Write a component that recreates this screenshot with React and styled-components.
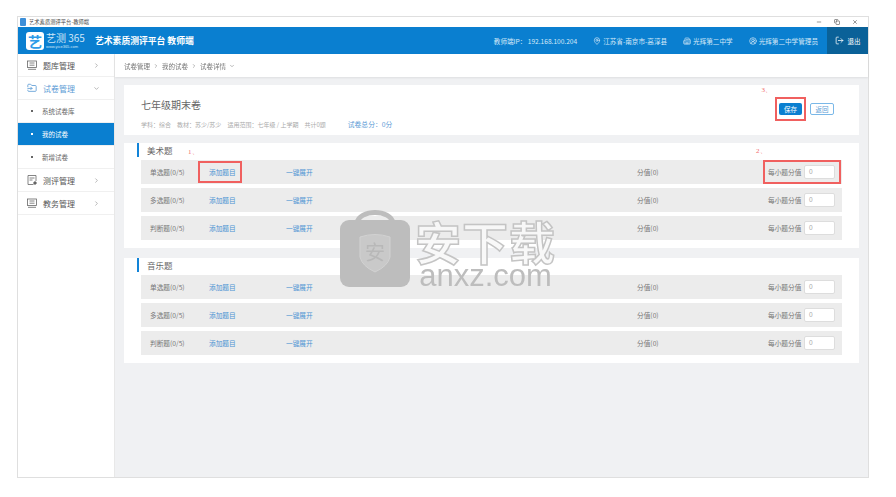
import React from 'react';
import styled, { createGlobalStyle } from 'styled-components';
import { ChevronRight, ChevronDown, Minus, X, Copy, LogOut, MapPin, Building2, UserCircle2, FolderInput } from 'lucide-react';

const Global = createGlobalStyle`
  html, body { margin: 0; padding: 0; background: #fff; }
  body { font-family: "Noto Sans CJK SC", "Liberation Sans", sans-serif; }
  * { box-sizing: border-box; }
`;
const Page = styled.div`position: relative; width: 896px; height: 497px; padding: 16px 0 0 17px; overflow: hidden;`;
const Win = styled.div`width: 852px; height: 462px; border: 1px solid #dfdfdf; display: flex; flex-direction: column; background: #f0f1f3; filter: blur(.3px);`;
const TitleBar = styled.div`height: 10px; background: #fff; display: flex; align-items: center; padding: 0 0 0 2px; gap: 3px; font-size: 5.3px; color: #444; flex: none;`;
const AppIcon = styled.span`width: 6px; height: 8px; background: #3d8fd8; border-radius: 1px; flex: none;`;
const WinButtons = styled.div`margin-left: auto; display: flex; align-items: center; gap: 12px; padding-right: 10px; color: #333;`;
const Header = styled.header`height: 27px; background: #0a7fd0; display: flex; align-items: center; color: #fff; flex: none;`;
const LogoBox = styled.div`width: 18px; height: 18px; margin-left: 8px; background: #fff; border-radius: 3px; color: #2f9be8; font-size: 14px; font-weight: 700; line-height: 18px; text-align: center; flex: none;`;
const Brand = styled.div`margin-left: 2px; width: 40px; display: flex; flex-direction: column; color: #cfe6f8;`;
const BrandName = styled.div`font-size: 10px; line-height: 12px; white-space: nowrap;`;
const BrandUrl = styled.div`font-size: 4px; line-height: 5px; white-space: nowrap; font-family: "Liberation Sans", sans-serif;`;
const AppName = styled.div`margin-left: 9px; font-size: 8.8px; font-weight: 700; white-space: nowrap;`;
const HeaderRight = styled.div`margin-left: auto; display: flex; align-items: center; height: 100%;`;
const Info = styled.div`display: flex; align-items: center; gap: 2px; font-size: 6.6px; color: #d5e9f8; white-space: nowrap; margin-right: ${p => p.$mr}px;`;
const Logout = styled.div`width: 41px; height: 100%; background: #0a6198; display: flex; align-items: center; justify-content: center; gap: 4px; font-size: 6.5px;`;
const Body = styled.div`flex: 1; display: flex; min-height: 0;`;
const Side = styled.aside`width: 97px; background: #fff; flex: none; border-right: 1px solid #e8e8e8;`;
const MenuItem = styled.div`height: 23px; display: flex; align-items: center; padding: 0 0 0 9px; gap: 6px; border-bottom: 1px solid #f0f0f0; font-size: 8px; color: ${p => p.$open ? '#5b9bd5' : '#555'}; > svg:last-child { margin-left: auto; margin-right: 14px; color: #888; }`;
const SubItem = styled.div`height: 23px; display: flex; align-items: center; padding-left: 13px; gap: 9px; border-bottom: 1px solid #f0f0f0; font-size: 6.5px; background: ${p => p.$on ? '#0a7fd0' : '#fff'}; color: ${p => p.$on ? '#fff' : '#666'};`;
const Dot = styled.span`width: 2px; height: 2px; background: currentColor;`;
const Main = styled.main`flex: 1; min-width: 0; display: flex; flex-direction: column;`;
const Crumbs = styled.div`height: 23px; background: #fff; display: flex; align-items: center; gap: 3px; padding-left: 9px; font-size: 6.5px; color: #777; box-shadow: 0 1px 2px rgba(0,0,0,.08); flex: none;`;
const Content = styled.div`padding: 8px 9px 0 9px; display: flex; flex-direction: column; gap: 10px;`;
const Summary = styled.section`height: 50px; background: #fff; padding: 13px 0 0 17px; position: relative; margin-bottom: -2px;`;
const PaperTitle = styled.h1`margin: 0; font-size: 10px; font-weight: 400; color: #666; line-height: 14px;`;
const Meta = styled.div`margin-top: 7px; display: flex; align-items: center; font-size: 6px; color: #aaa; gap: 6px; white-space: nowrap;`;
const Total = styled.span`color: #5b9bd5; font-size: 6.8px; margin-left: 16px;`;
const Actions = styled.div`position: absolute; right: 25px; top: 12px; display: flex; align-items: center; gap: 4px;`;
const Note = styled.span`position: absolute; color: #f26d6d; font-size: 7px; font-family: "Liberation Serif", serif; white-space: nowrap;`;
const Save = styled.div`position: relative; width: 31px; height: 24px; border: 2px solid #f0605f; display: flex; align-items: center; justify-content: center;`;
const SaveBtn = styled.div`width: 23px; height: 12px; background: #0a7fd0; color: #fff; border-radius: 2px; font-size: 6.5px; line-height: 12px; text-align: center;`;
const BackBtn = styled.div`width: 24px; height: 12px; background: #fff; border: 1px solid #7ab8e8; color: #5b9bd5; border-radius: 2px; font-size: 6.5px; line-height: 10px; text-align: center;`;
const Card = styled.section`height: 105px; background: #fff; padding: 0 17px; position: relative;`;
const CardTitle = styled.h2`margin: 0 0 0 -4px; height: 14px; border-left: 2px solid #1284d8; padding-left: 8px; font-size: 8.5px; line-height: 14px; font-weight: 400; color: #666;`;
const Rows = styled.div`margin-top: 3px; display: flex; flex-direction: column; gap: 4px;`;
const Row = styled.div`height: 24px; background: #ececec; display: flex; align-items: center; padding-left: 9px; font-size: 6.7px; color: #777; white-space: nowrap;`;
const Kind = styled.span`width: 48px;`;
const LinkBox = styled.span`width: 44px; height: 22px; padding-left: 9px; display: flex; align-items: center; color: #4b93d3; border: 2px solid ${p => p.$mark ? '#f0605f' : 'transparent'};`;
const Expand = styled.span`margin-left: 44px; color: #4b93d3; width: 351px;`;
const Score = styled.div`margin-left: auto; height: 24px; width: 78px; padding: 0 4px 0 3px; display: flex; align-items: center; justify-content: space-between; border: 2px solid ${p => p.$mark ? '#f0605f' : 'transparent'}; margin-right: 1px;`;
const ScoreInput = styled.div`width: 31px; height: 14px; background: #fff; border: 1px solid #ddd; border-radius: 2px; color: #aaa; font-size: 6.5px; line-height: 12px; padding-left: 4px; font-family: "Liberation Sans", sans-serif;`;
const Mark = styled.div`position: absolute; left: 340px; top: 207px; display: flex; gap: 5px; pointer-events: none;`;
const MarkText = styled.div`display: flex; flex-direction: column; align-items: center; margin-top: 10px;`;
const MarkCn = styled.div`font-size: 46px; line-height: 47px; font-weight: 700; letter-spacing: 1px; color: rgba(248,248,248,.9); -webkit-text-stroke: 1.5px #c4c4c4; white-space: nowrap;`;
const MarkEn = styled.div`font-size: 31px; line-height: 24px; color: #bdbdbd; font-family: "Liberation Sans", sans-serif; white-space: nowrap;`;

const BoardIcon = () => (
  <svg width="10" height="10" viewBox="0 0 10 10" fill="none" stroke="#666" strokeWidth=".8">
    <rect x=".5" y="1" width="9" height="6.5" />
    <path d="M2.5 3h5M2.5 5.2h5M1 9.3h8" />
  </svg>
);
const ReviewIcon = () => (
  <svg width="10" height="10" viewBox="0 0 10 10" fill="none" stroke="#666" strokeWidth=".8">
    <path d="M6.5 9.5H1V.5h8v5.5" />
    <path d="M2.5 3h5M2.5 5h3" />
    <circle cx="8" cy="8" r="1.3" fill="#666" />
  </svg>
);

const Question = ({ kind, mark }) => (
  <Row>
    <Kind>{kind}(0/5)</Kind>
    <LinkBox $mark={mark}>添加题目</LinkBox>
    <Expand>一键展开</Expand>
    <span>分值(0)</span>
    <Score $mark={mark}>每小题分值<ScoreInput>0</ScoreInput></Score>
  </Row>
);

const Section = ({ title, mark }) => (
  <Card>
    <CardTitle>{title}</CardTitle>
    {mark && <Note style={{ left: 64, top: 4 }}>1、</Note>}
    {mark && <Note style={{ left: 632, top: 3 }}>2、</Note>}
    <Rows>
      <Question kind="单选题" mark={mark} />
      <Question kind="多选题" />
      <Question kind="判断题" />
    </Rows>
  </Card>
);

export default function App() {
  return (
    <Page>
      <Global />
      <Win>
        <TitleBar>
          <AppIcon />艺术素质测评平台-教师端
          <WinButtons><Minus size={6} /><Copy size={6} /><X size={6} /></WinButtons>
        </TitleBar>
        <Header>
          <LogoBox>艺</LogoBox>
          <Brand><BrandName>艺测 365</BrandName><BrandUrl>www.yice365.com</BrandUrl></Brand>
          <AppName>艺术素质测评平台 教师端</AppName>
          <HeaderRight>
            <Info $mr={16}>教师端IP： 192.168.100.204</Info>
            <Info $mr={16}><MapPin size={8} />江苏省-南京市-高淳县</Info>
            <Info $mr={16}><Building2 size={8} />光辉第二中学</Info>
            <Info $mr={9}><UserCircle2 size={8} />光辉第二中学管理员</Info>
            <Logout><LogOut size={9} />退出</Logout>
          </HeaderRight>
        </Header>
        <Body>
          <Side>
            <MenuItem><BoardIcon />题库管理<ChevronRight size={7} /></MenuItem>
            <MenuItem $open><FolderInput size={10} />试卷管理<ChevronDown size={7} /></MenuItem>
            <SubItem><Dot />系统试卷库</SubItem>
            <SubItem $on><Dot />我的试卷</SubItem>
            <SubItem><Dot />新增试卷</SubItem>
            <MenuItem><ReviewIcon />测评管理<ChevronRight size={7} /></MenuItem>
            <MenuItem><BoardIcon />教务管理<ChevronRight size={7} /></MenuItem>
          </Side>
          <Main>
            <Crumbs>试卷管理<ChevronRight size={6} />我的试卷<ChevronRight size={6} />试卷详情<ChevronDown size={6} /></Crumbs>
            <Content>
              <Summary>
                <PaperTitle>七年级期末卷</PaperTitle>
                <Meta>
                  <span>学科：综合</span><span>教材：苏少/苏少</span><span>适用范围：七年级 / 上学期</span><span>共计0题</span>
                  <Total>试卷总分：0分</Total>
                </Meta>
                <Note style={{ right: 87, top: 0 }}>3、</Note>
                <Actions>
                  <Save><SaveBtn>保存</SaveBtn></Save>
                  <BackBtn>返回</BackBtn>
                </Actions>
              </Summary>
              <Section title="美术题" mark />
              <Section title="音乐题" />
            </Content>
          </Main>
        </Body>
      </Win>
      <Mark>
        <svg width="70" height="80" viewBox="0 0 70 80">
          <path d="M17 16 C19 2 51 2 53 16" fill="none" stroke="#bdbdbd" strokeWidth="5" />
          <rect x="0" y="13" width="70" height="67" rx="9" fill="#bdbdbd" />
          <path d="M20 30 Q35 25 50 30 V50 Q48 59 35 65 Q22 59 20 50 Z" fill="#c9c9c9" stroke="#d2d2d2" />
          <text x="35" y="53" textAnchor="middle" fontSize="20" fill="#b8b8b8" fontFamily='"Noto Sans CJK SC", sans-serif'>安</text>
        </svg>
        <MarkText>
          <MarkCn>安下载</MarkCn>
          <MarkEn>anxz.com</MarkEn>
        </MarkText>
      </Mark>
    </Page>
  );
}
